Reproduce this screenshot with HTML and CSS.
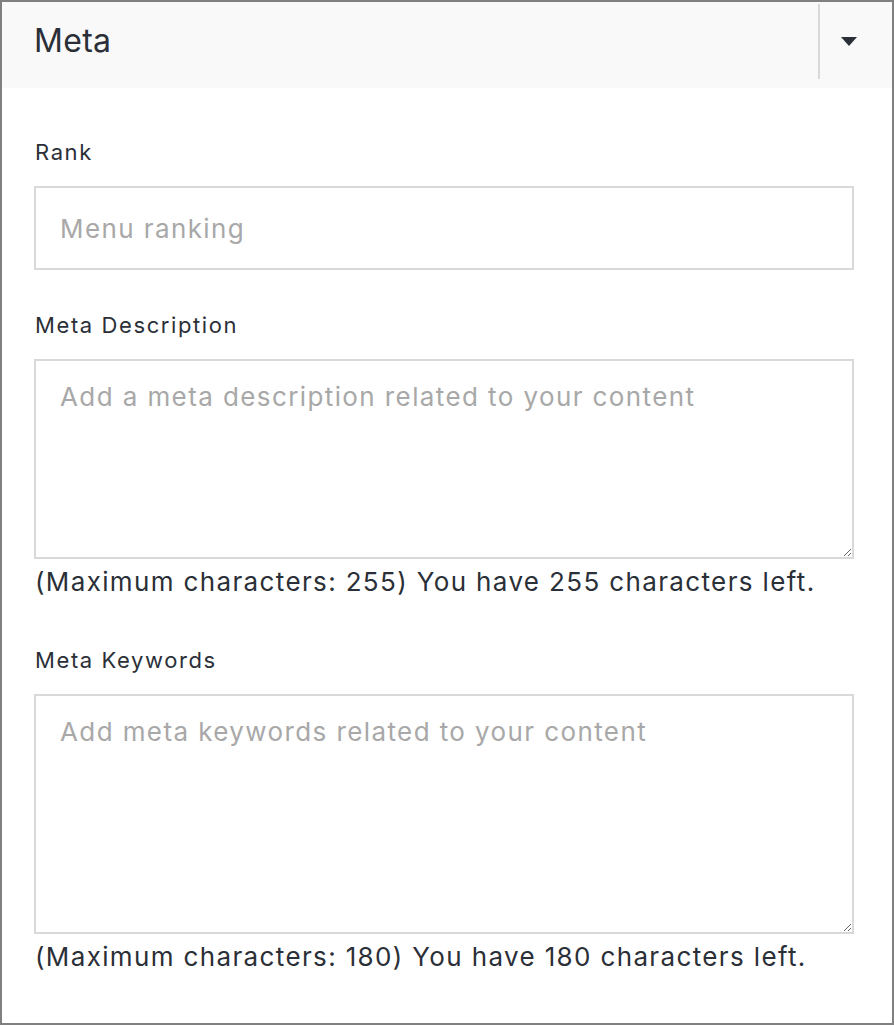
FILE: index.html
```html
<!DOCTYPE html>
<html lang="en">
<head>
<meta charset="utf-8">
<title>Meta</title>
<link rel="stylesheet" href="styles.css">
</head>
<body>
<div class="panel">
  <div class="panel-header">
    <div class="panel-title">Meta</div>
    <button class="panel-toggle" type="button" aria-label="Toggle">
      <svg width="16" height="9" viewBox="0 0 16 9"><path d="M0 0H16L8 9Z" fill="#2b2f37"/></svg>
    </button>
  </div>
  <div class="panel-body">
    <div class="field">
      <label class="field-label" for="rank">Rank</label>
      <input class="field-input" id="rank" type="text" placeholder="Menu ranking">
    </div>
    <div class="field">
      <label class="field-label" for="desc">Meta Description</label>
      <textarea class="field-textarea desc" id="desc" placeholder="Add a meta description related to your content"></textarea>
      <div class="field-help">(Maximum characters: 255) You have 255 characters left.</div>
    </div>
    <div class="field">
      <label class="field-label" for="kw">Meta Keywords</label>
      <textarea class="field-textarea kw" id="kw" placeholder="Add meta keywords related to your content"></textarea>
      <div class="field-help">(Maximum characters: 180) You have 180 characters left.</div>
    </div>
  </div>
</div>
</body>
</html>
```

FILE: styles.css
```css
html, body {
  margin: 0;
  padding: 0;
  background: #ffffff;
}
body {
  font-family: Inter, "Noto Sans", sans-serif;
  color: #2b2f37;
}
.panel {
  box-sizing: border-box;
  width: 894px;
  height: 1025px;
  border: 2px solid #808080;
  background: #ffffff;
}
.panel-header {
  display: flex;
  align-items: flex-start;
  height: 86px;
  background: #f9f9f9;
}
.panel-title {
  flex: 1;
  padding: 15px 0 0 32px;
  font-size: 32px;
  line-height: 48px;
  letter-spacing: 0.3px;
}
.panel-toggle {
  box-sizing: border-box;
  width: 74px;
  height: 75px;
  margin-top: 2px;
  padding: 0 0 0 21px;
  border: 0;
  border-left: 2px solid #d9d9d9;
  background: transparent;
  display: flex;
  align-items: center;
}
.panel-toggle svg {
  display: block;
}
.panel-body {
  padding: 49px 38px 0 32px;
}
.field {
  display: flex;
  flex-direction: column;
  margin-bottom: 40px;
}
.field-label {
  font-size: 22px;
  line-height: 30px;
  letter-spacing: 1.6px;
  margin-bottom: 19px;
  padding-left: 1px;
}
.field-input,
.field-textarea {
  box-sizing: border-box;
  width: 820px;
  margin: 0;
  border: 2px solid #d9d9d9;
  border-radius: 0;
  font-family: Inter, "Noto Sans", sans-serif;
  font-size: 26px;
  line-height: 39px;
  letter-spacing: 1.4px;
  color: #2b2f37;
  background: #ffffff;
  padding: 0 24px;
  outline: none;
}
.field-input {
  height: 84px;
}
.field-textarea {
  padding-top: 16px;
  resize: vertical;
}
.field-textarea.desc {
  height: 200px;
}
.field-textarea.kw {
  height: 240px;
}
.field-input::placeholder,
.field-textarea::placeholder {
  color: #a8a8a8;
  opacity: 1;
}
.field-help {
  margin-top: 3px;
  margin-bottom: 4px;
  font-size: 26px;
  line-height: 39px;
  letter-spacing: 1.36px;
  padding-left: 1px;
}
```
